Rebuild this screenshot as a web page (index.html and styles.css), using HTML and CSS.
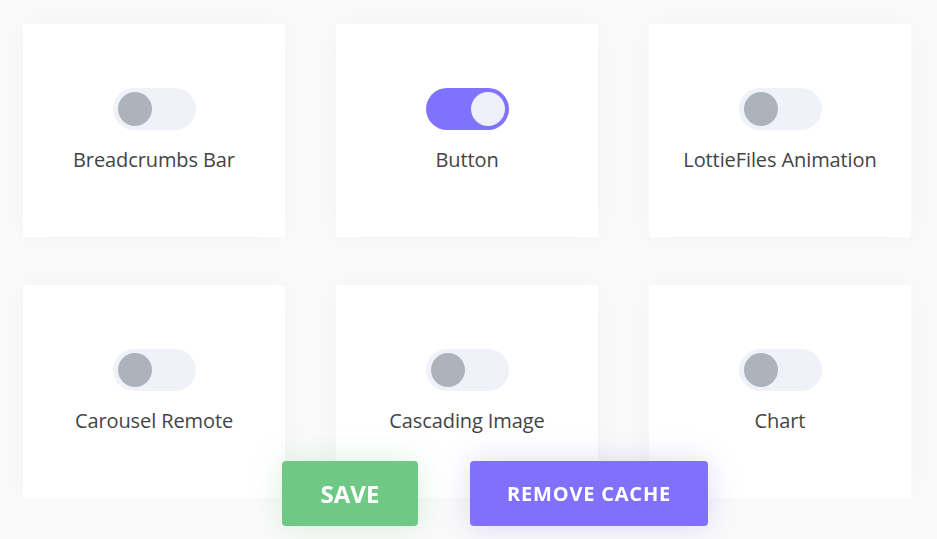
FILE: index.html
```html
<!DOCTYPE html>
<html lang="en">
<head>
  <meta charset="UTF-8" />
  <title>Elements</title>
  <meta name="viewport" content="width=device-width, initial-scale=1" />
  <link rel="stylesheet" href="styles.css">
</head>
<body>
  <div class="elements">
    <div class="card">
      <label class="switch"><input type="checkbox"><span class="slider"></span></label>
      <span class="name">Breadcrumbs Bar</span>
    </div>
    <div class="card">
      <label class="switch"><input type="checkbox" checked><span class="slider"></span></label>
      <span class="name">Button</span>
    </div>
    <div class="card">
      <label class="switch"><input type="checkbox"><span class="slider"></span></label>
      <span class="name">LottieFiles Animation</span>
    </div>
    <div class="card">
      <label class="switch"><input type="checkbox"><span class="slider"></span></label>
      <span class="name">Carousel Remote</span>
    </div>
    <div class="card">
      <label class="switch"><input type="checkbox"><span class="slider"></span></label>
      <span class="name">Cascading Image</span>
    </div>
    <div class="card">
      <label class="switch"><input type="checkbox"><span class="slider"></span></label>
      <span class="name">Chart</span>
    </div>
  </div>

  <div class="actions">
    <button class="btn btn-save">Save</button>
    <button class="btn btn-cache">Remove Cache</button>
  </div>
</body>
</html>
```

FILE: styles.css
```css
body {
  font-family: "Open Sans", "Noto Sans", sans-serif;
  margin: 0;
  padding: 0;
  background: #fafafa;
  color: #444;
}

/* Raster der Elemente */
.elements {
  display: grid;
  grid-template-columns: repeat(3, 262px);
  column-gap: 51px;
  row-gap: 48px;
  padding: 24px 0 0 23px;
}
.card {
  height: 213px;
  background: #fff;
  box-shadow: 0 0 30px rgba(0, 0, 0, 0.035);
  display: flex;
  flex-direction: column;
  align-items: center;
  justify-content: center;
  gap: 16px;
}
.name {
  font-size: 20px;
  line-height: 28px;
  color: #444;
  letter-spacing: -0.1px;
}

/* Schalter */
.switch {
  display: block;
  position: relative;
  width: 83px;
  height: 42px;
  cursor: pointer;
}
.switch input {
  opacity: 0;
  width: 0;
  height: 0;
  position: absolute;
}
.slider {
  position: absolute;
  inset: 0;
  background: #eff2f9;
  border-radius: 21px;
}
.slider::before {
  content: "";
  position: absolute;
  left: 5px;
  top: 4px;
  width: 34px;
  height: 34px;
  border-radius: 50%;
  background: #acb3ba;
}
.switch input:checked + .slider {
  background: #7f72fc;
}
.switch input:checked + .slider::before {
  left: 45px;
  background: #eef0f9;
}

/* Buttons unten */
.actions {
  position: fixed;
  left: 0;
  right: 0;
  bottom: 13px;
  display: flex;
  justify-content: center;
  gap: 52px;
  padding-left: 53px;
}
.btn {
  height: 65px;
  border: none;
  border-radius: 4px;
  color: #fff;
  font-family: inherit;
  font-weight: 700;
  text-transform: uppercase;
  cursor: pointer;
}
.btn-save {
  width: 136px;
  font-size: 24px;
  background: #6fc985;
  box-shadow: 0 0 30px rgba(111, 201, 133, 0.25);
}
.btn-cache {
  width: 238px;
  font-size: 20px;
  letter-spacing: 0.8px;
  background: #8070fc;
  box-shadow: 0 0 30px rgba(128, 112, 252, 0.25);
}
```
